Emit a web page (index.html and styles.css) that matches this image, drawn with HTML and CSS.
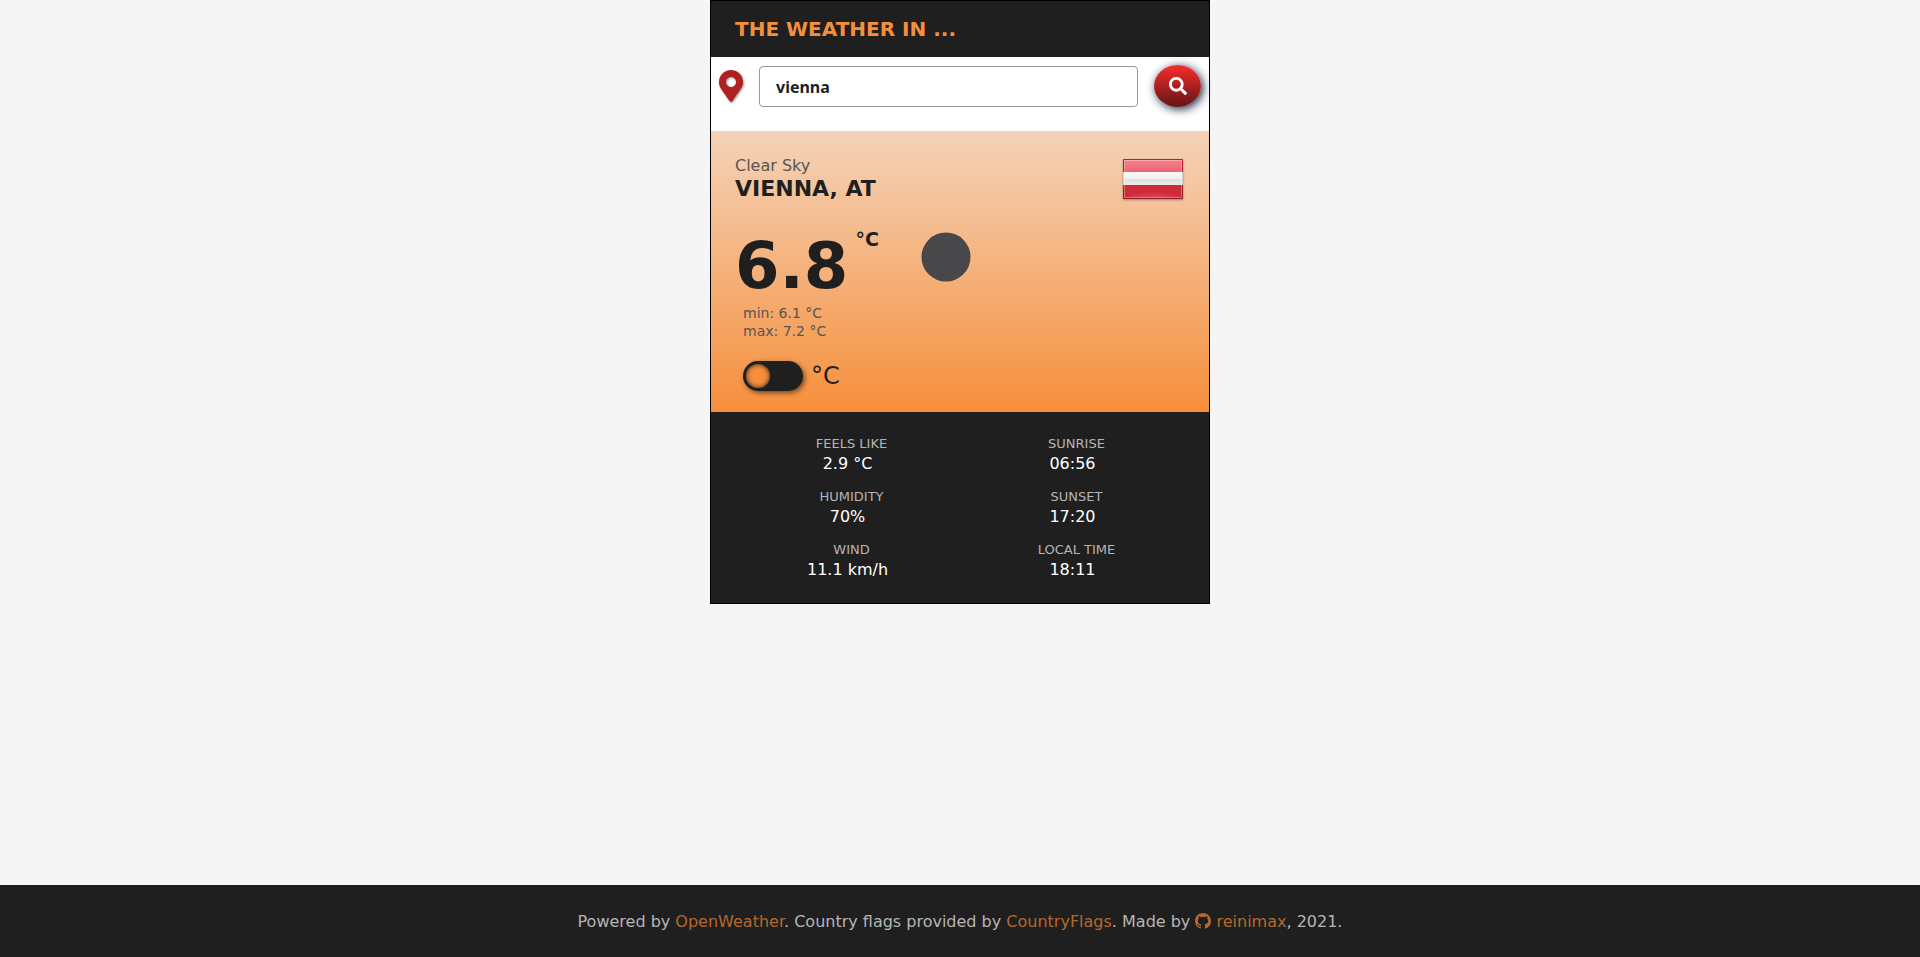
FILE: index.html
```html
<!DOCTYPE html>
<html lang="en">
<head>
<meta charset="utf-8">
<title>The weather in ...</title>
<link rel="stylesheet" href="styles.css">
</head>
<body>
<main class="card">
  <header class="card-header"><h1 class="title">THE WEATHER IN ...</h1></header>
  <form class="search">
    <svg class="pin" viewBox="0 0 384 512" aria-hidden="true"><path d="M172.268 501.67C26.97 291.031 0 269.413 0 192 0 85.961 85.961 0 192 0s192 85.961 192 192c0 77.413-26.97 99.031-172.268 309.67-9.535 13.774-29.93 13.773-39.464 0zM192 272c44.183 0 80-35.817 80-80s-35.817-80-80-80-80 35.817-80 80 35.817 80 80 80z"/></svg>
    <input class="search-input" type="text" value="vienna" aria-label="City">
    <button class="search-button" type="button" aria-label="Search">
      <svg class="search-icon" viewBox="0 0 512 512" aria-hidden="true"><path d="M505 442.7L405.3 343c-4.500-4.500-10.600-7-17-7H372c27.600-35.300 44-79.700 44-128C416 93.100 322.900 0 208 0S0 93.100 0 208s93.100 208 208 208c48.300 0 92.700-16.400 128-44v16.300c0 6.400 2.500 12.500 7 17l99.700 99.700c9.400 9.400 24.600 9.400 33.900 0l28.300-28.300c9.400-9.400 9.400-24.600.1-34zM208 336c-70.700 0-128-57.200-128-128 0-70.700 57.200-128 128-128 70.700 0 128 57.200 128 128 0 70.700-57.200 128-128 128z"/></svg>
    </button>
  </form>
  <section class="current">
    <div class="place">
      <div>
        <p class="condition">Clear Sky</p>
        <h2 class="city">VIENNA, AT</h2>
      </div>
      <svg class="flag" viewBox="0 0 60 40" role="img" aria-label="Austria">
        <defs>
          <linearGradient id="top" x2="0" y2="1"><stop stop-color="#f8848c"/><stop offset="1" stop-color="#ea6472"/></linearGradient>
          <linearGradient id="mid" x2="0" y2="1"><stop stop-color="#f8f8f8"/><stop offset=".54" stop-color="#f0f0f0"/><stop offset=".55" stop-color="#dfdfdf"/><stop offset="1" stop-color="#eaeaea"/></linearGradient>
          <radialGradient id="low" cx=".5" cy="1" r=".5"><stop stop-color="#e64a58"/><stop offset="1" stop-color="#cf2c3b"/></radialGradient>
          <linearGradient id="edge" gradientUnits="userSpaceOnUse" x1="0" y1="0" x2="0" y2="40"><stop stop-color="#c01f2c"/><stop offset="1" stop-color="#85202b"/></linearGradient>
        </defs>
        <path fill="url(#top)" d="M0 0h60v13H0z"/>
        <path fill="url(#mid)" d="M0 13h60v13H0z"/>
        <path fill="url(#low)" d="M0 26h60v14H0z"/>
        <path fill="none" stroke="#fff" stroke-opacity=".3" d="M1.500 1.500h57v37h-57z"/>
        <path fill="none" stroke="url(#edge)" d="M.5 13V.5h59V13M.5 26v13.500h59V26"/>
        <path fill="none" stroke="#d0d0d0" d="M.5 13v13M59.500 13v13"/>
      </svg>
    </div>
    <div class="reading">
      <p class="temperature">6.8</p>
      <span class="unit">°C</span>
      <svg class="sky" viewBox="0 0 50 50" role="img" aria-label="Clear night"><circle cx="25" cy="25" r="24.500"/></svg>
    </div>
    <p class="range">min: 6.1 °C<br>max: 7.2 °C</p>
    <label class="toggle"><input class="switch" type="checkbox">°C</label>
  </section>
  <dl class="details">
    <div><dt>FEELS LIKE</dt><dd>2.9 °C</dd></div>
    <div><dt>SUNRISE</dt><dd>06:56</dd></div>
    <div><dt>HUMIDITY</dt><dd>70%</dd></div>
    <div><dt>SUNSET</dt><dd>17:20</dd></div>
    <div><dt>WIND</dt><dd>11.1 km/h</dd></div>
    <div><dt>LOCAL TIME</dt><dd>18:11</dd></div>
  </dl>
</main>
<footer class="footer">
  <p>Powered by <a href="#">OpenWeather</a>. Country flags provided by <a href="#">CountryFlags</a>. Made by <a href="#"><svg class="github" viewBox="0 0 16 16" aria-hidden="true"><path d="M8 0C3.580 0 0 3.580 0 8c0 3.540 2.290 6.530 5.470 7.590.4.070.55-.17.55-.38 0-.19-.01-.82-.01-1.490-2.010.37-2.530-.49-2.690-.94-.09-.23-.48-.94-.82-1.130-.28-.15-.68-.52-.01-.53.63-.01 1.080.58 1.230.82.72 1.210 1.870.87 2.330.66.07-.52.28-.87.51-1.070-1.780-.2-3.640-.89-3.640-3.950 0-.87.31-1.590.82-2.150-.08-.2-.36-1.020.08-2.120 0 0 .67-.21 2.200.82a7.500 7.500 0 0 1 4 0c1.530-1.040 2.200-.82 2.200-.82.44 1.100.16 1.920.08 2.120.51.56.82 1.270.82 2.150 0 3.070-1.870 3.750-3.650 3.950.29.25.54.73.54 1.480 0 1.070-.01 1.930-.01 2.200 0 .21.15.46.55.38A8 8 0 0 0 16 8c0-4.420-3.580-8-8-8z"/></svg> reinimax</a>, 2021.</p>
</footer>
</body>
</html>
```

FILE: styles.css
```css
* {
  box-sizing: border-box;
}

body {
  margin: 0;
  min-height: 100vh;
  display: flex;
  flex-direction: column;
  background: #f5f5f5;
  color: #1f1f1f;
  font: 16px/20px "DejaVu Sans", sans-serif;
}

h1, h2, p, dl, dd {
  margin: 0;
}

.card {
  width: 100%;
  max-width: 500px;
  margin: 0 auto;
  border: 1px solid #000;
  background: #fff;
}

.card-header {
  padding: 16px 24px;
  background: #1f1f1f;
}

.title {
  color: #f68f3c;
  font-size: 20px;
  line-height: 24px;
}

.search {
  display: flex;
  align-items: flex-start;
  gap: 16px;
  padding: 8px 8px 24px;
}

.pin {
  width: 24px;
  height: 32px;
  margin-top: 5px;
  fill: #b02020;
  filter: drop-shadow(1px 1px 1px #00000066);
}

.search-input {
  flex: 1;
  min-width: 0;
  height: 41px;
  margin-top: 1px;
  padding: 0 16px;
  border: 1px solid #999;
  border-radius: 4px;
  background: #fff;
  color: #1f1f1f;
  font: 700 16px "Noto Sans", sans-serif;
}

.search-button {
  display: grid;
  place-items: center;
  width: 47px;
  height: 42px;
  padding: 0;
  border: 0;
  border-radius: 50%;
  background: linear-gradient(#f92d2d, #601515);
  box-shadow: 2px 2px 10px #14213d;
}

.search-icon {
  width: 18px;
  height: 18px;
  fill: #fff;
}

.current {
  padding: 25px 24px 20px;
  background: linear-gradient(#f4d3b9, #f68f3c);
}

.place {
  display: flex;
  justify-content: space-between;
  align-items: flex-start;
}

.condition {
  color: #555;
}

.city {
  font-size: 22px;
  line-height: 26px;
}

.flag {
  width: 60px;
  height: 40px;
  margin: 3px 2px 0 0;
  filter: drop-shadow(0 1px 1px #00000055);
}

.reading {
  display: flex;
  align-items: flex-start;
  margin-top: 27px;
}

.temperature {
  font-size: 64px;
  font-weight: 700;
  line-height: 74px;
}

.unit {
  margin-left: 7px;
  font-size: 19px;
  font-weight: 700;
}

.sky {
  width: 50px;
  height: 50px;
  margin: 3px 0 0 42px;
  fill: #48484a;
}

.range {
  padding: 1px 8px 0;
  color: #555;
  font-size: 14px;
  line-height: 18px;
}

.toggle {
  display: flex;
  align-items: center;
  gap: 8px;
  width: fit-content;
  margin: 20px 0 0 8px;
  font-size: 24px;
  line-height: 32px;
}

.switch {
  appearance: none;
  width: 60px;
  height: 30px;
  margin: 0;
  padding: 3px;
  border-radius: 16px;
  background: #1f1f1f;
  box-shadow: 2px 2px 5px #00000088;
}

.switch::before {
  content: "";
  display: block;
  width: 24px;
  height: 24px;
  border-radius: 50%;
  background: #f68f3c;
  box-shadow: inset 0 0 5px #1f1f1f;
}

.details {
  display: grid;
  grid-template-columns: 1fr 1fr;
  row-gap: 13px;
  padding: 22px 20px 23px 28px;
  background: #1f1f1f;
  text-align: center;
}

.details dt {
  color: #b5b5b5;
  font-size: 13px;
}

.details dd {
  padding-right: 8px;
  color: #fff;
}

.footer {
  margin-top: auto;
  padding: 27px 16px 25px;
  background: #1f1f1f;
  color: #b5b5b5;
  text-align: center;
}

.footer a {
  color: #b5682e;
  text-decoration: none;
}

.github {
  width: 16px;
  height: 16px;
  vertical-align: -2px;
  fill: currentColor;
}
```
